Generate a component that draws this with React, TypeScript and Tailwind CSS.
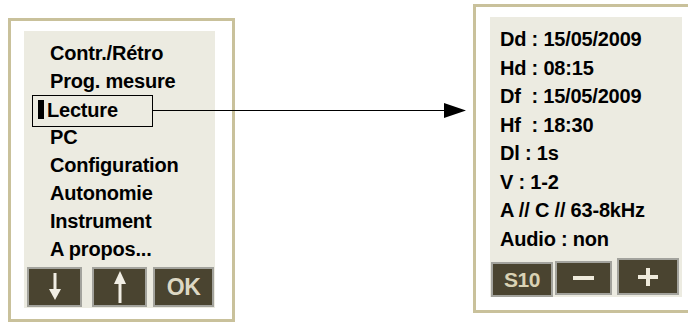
import React from "react";

const leftItems = [
  "Contr./Rétro",
  "Prog. mesure",
  "Lecture",
  "PC",
  "Configuration",
  "Autonomie",
  "Instrument",
  "A propos...",
];

const rightItems = [
  "Dd : 15/05/2009",
  "Hd : 08:15",
  "Df  : 15/05/2009",
  "Hf  : 18:30",
  "Dl : 1s",
  "V : 1-2",
  "A // C // 63-8kHz",
  "Audio : non",
];

const font = { fontFamily: '"Liberation Sans", Arial, sans-serif' };

export default function App() {
  return (
    <div
      className="relative w-[688px] h-[323px] overflow-hidden bg-white flex items-start"
      style={font}
    >
      {/* écran menu */}
      <div className="ml-[8px] mt-[18px] w-[227px] h-[304px] border-[3px] border-[#c9c19b] pl-[13px] pt-[10px] shrink-0">
        <div className="w-[191px] h-[277px] bg-[#ecebe1] pt-[8px] flex flex-col">
          {leftItems.map((item) =>
            item === "Lecture" ? (
              <div
                key={item}
                className="ml-[8px] -mb-[4px] w-[121px] h-[32px] border border-black flex items-start pt-[2px]"
              >
                <span className="ml-[5px] mt-[2px] w-[6px] h-[19px] bg-black" />
                <span className="ml-[3px] text-[20px] leading-[24px] font-bold tracking-[-0.2px] text-black">
                  {item}
                </span>
              </div>
            ) : (
              <div
                key={item}
                className="pl-[26px] h-[28px] text-[20px] leading-[28px] font-bold tracking-[-0.2px] text-black whitespace-pre"
              >
                {item}
              </div>
            )
          )}
          <div className="mt-[4px] pl-[3px] flex gap-[10px]">
            <div className="w-[55px] h-[40px] bg-[#4a4430] border-2 border-[#a3a39d] flex items-center justify-center">
              <svg width="14" height="28" viewBox="0 0 14 28">
                <rect x="5.5" y="0" width="3" height="18" fill="#f1eee4" />
                <polygon points="1,16 13,16 7,27" fill="#f1eee4" />
              </svg>
            </div>
            <div className="w-[55px] h-[40px] bg-[#4a4430] border-2 border-[#a3a39d] flex items-center justify-center">
              <svg width="14" height="32" viewBox="0 0 14 32">
                <polygon points="7,0 13,13 1,13" fill="#f1eee4" />
                <rect x="5.5" y="11" width="3" height="21" fill="#f1eee4" />
              </svg>
            </div>
            <div className="-ml-[4px] w-[61px] h-[40px] bg-[#4a4430] border-2 border-[#a3a39d] flex items-center justify-center text-[#ddd8c4] text-[23px] font-bold tracking-[-0.5px]">
              OK
            </div>
          </div>
        </div>
      </div>

      {/* écran lecture */}
      <div className="ml-[238px] mt-[4px] w-[230px] h-[309px] border-[3px] border-[#c9c19b] pl-[14px] pt-[10px] shrink-0">
        <div className="w-[192px] h-[280px] bg-[#ecebe1] pt-[8px] flex flex-col">
          {rightItems.map((item) => (
            <div
              key={item}
              className="pl-[10px] h-[28.5px] text-[20px] leading-[28px] font-bold tracking-[-0.2px] text-black whitespace-pre"
            >
              {item}
            </div>
          ))}
          <div className="mt-[5px] pl-[1px] flex items-start">
            <div className="mt-[4px] w-[62px] h-[35px] bg-[#4a4430] border-2 border-[#a3a39d] flex items-center justify-center text-[#d9d2b4] text-[21px] font-bold tracking-[-0.5px]">
              S10
            </div>
            <div className="ml-[2px] mt-[3px] w-[57px] h-[34px] bg-[#4a4430] border-2 border-[#a3a39d] flex items-center justify-center">
              <span className="w-[21px] h-[4px] bg-[#efebdc]" />
            </div>
            <div className="ml-[5px] w-[62px] h-[37px] bg-[#4a4430] border-2 border-[#a3a39d] flex items-center justify-center">
              <svg width="20" height="18" viewBox="0 0 20 18">
                <rect x="0" y="7" width="20" height="4" fill="#efebdc" />
                <rect x="8" y="0" width="4" height="18" fill="#efebdc" />
              </svg>
            </div>
          </div>
        </div>
      </div>

      {/* flèche de liaison */}
      <svg
        className="absolute left-0 top-0 pointer-events-none"
        width="688"
        height="323"
        viewBox="0 0 688 323"
      >
        <line x1="152" y1="110.5" x2="446" y2="110.5" stroke="black" strokeWidth="1.2" />
        <polygon points="444,103 466,110.5 444,118" fill="black" />
      </svg>
    </div>
  );
}
